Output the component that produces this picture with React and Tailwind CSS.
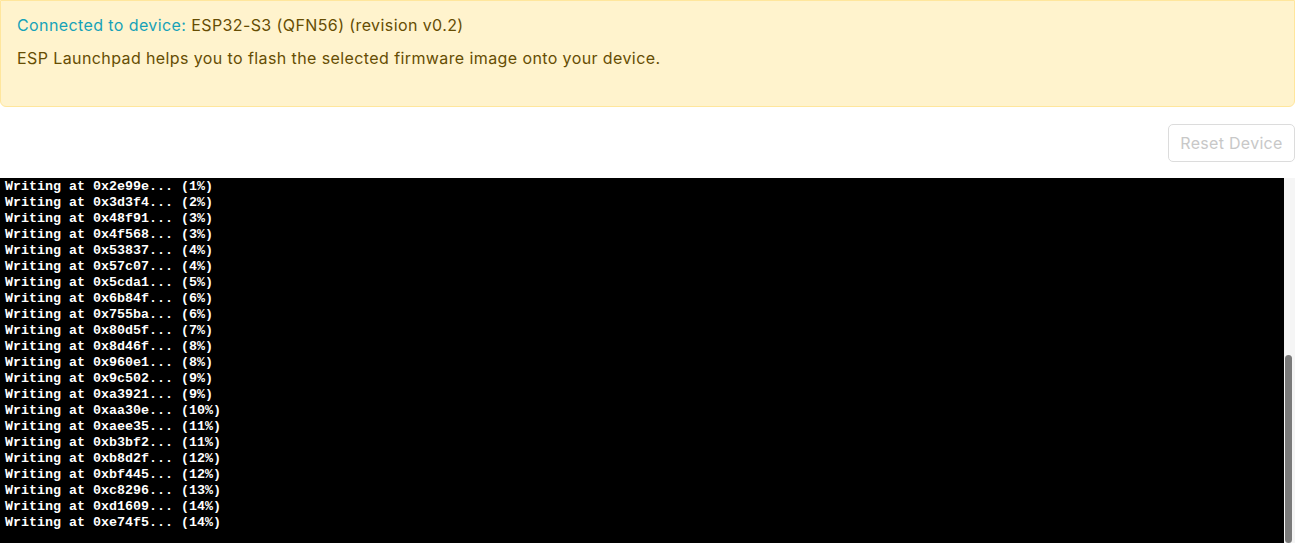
const lines = [
  ['0x2e99e', '1'],
  ['0x3d3f4', '2'],
  ['0x48f91', '3'],
  ['0x4f568', '3'],
  ['0x53837', '4'],
  ['0x57c07', '4'],
  ['0x5cda1', '5'],
  ['0x6b84f', '6'],
  ['0x755ba', '6'],
  ['0x80d5f', '7'],
  ['0x8d46f', '8'],
  ['0x960e1', '8'],
  ['0x9c502', '9'],
  ['0xa3921', '9'],
  ['0xaa30e', '10'],
  ['0xaee35', '11'],
  ['0xb3bf2', '11'],
  ['0xb8d2f', '12'],
  ['0xbf445', '12'],
  ['0xc8296', '13'],
  ['0xd1609', '14'],
  ['0xe74f5', '14'],
];

export default function App() {
  return (
    <div className="w-[1297px] h-[543px] overflow-hidden bg-white font-['Inter',sans-serif]">
      <div className="w-[1295px]">
        {/* Connection banner */}
        <div className="h-[107px] bg-[#fff3cd] border border-[#ffe69c] rounded-b-[6px] px-4 pt-[12px] text-[#664d03] text-[16px] tracking-[0.4px]">
          <div className="leading-[24px]">
            <span className="text-[#17a2b8]">Connected to device: </span>
            ESP32-S3 (QFN56) (revision v0.2)
          </div>
          <p className="leading-[24px] mt-[9px]">
            ESP Launchpad helps you to flash the selected firmware image onto your device.
          </p>
        </div>

        {/* Actions */}
        <div className="flex justify-end pt-[17px] pb-[16px]">
          <button
            disabled
            className="h-[38px] w-[127px] border border-[#dcdcdc] rounded-[5px] text-[#c8c8c8] text-[16px] tracking-[0.3px] bg-white"
          >
            Reset Device
          </button>
        </div>

        {/* Terminal */}
        <div className="flex h-[365px] bg-black">
          <div className="flex-1 pl-[5px] pt-[1px] text-white font-['Liberation_Mono',monospace] font-bold text-[13.33px] leading-[16px] whitespace-pre">
            {lines.map(([addr, pct]) => (
              <div key={addr}>{`Writing at ${addr}... (${pct}%)`}</div>
            ))}
          </div>
          <div className="w-[11px] bg-[#f5f5f5] pt-[177px] pl-[1px] pr-[3px]">
            <div className="h-full bg-[#7a7a7a] rounded-full" />
          </div>
        </div>
      </div>
    </div>
  );
}
